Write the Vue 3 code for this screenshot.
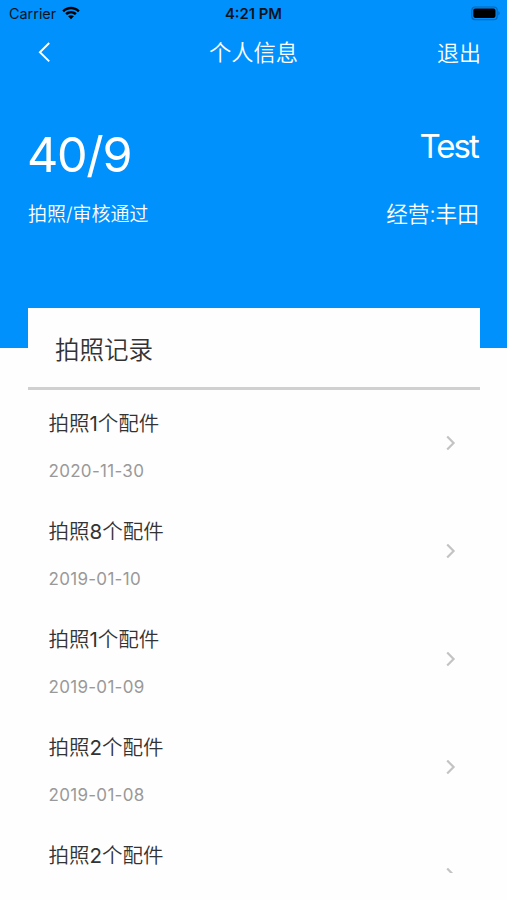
<script setup>
const records = [
  { id: 1, count: 1, date: '2020-11-30' },
  { id: 2, count: 8, date: '2019-01-10' },
  { id: 3, count: 1, date: '2019-01-09' },
  { id: 4, count: 2, date: '2019-01-08' },
  { id: 5, count: 2 },
]
</script>

<template>
  <div class="screen">
    <header class="hero">
      <div class="status">
        <div class="carrier">
          <span>Carrier</span>
          <svg class="wifi" width="18" height="14" viewBox="0 0 18 14">
            <path d="M0.3 4.4C5.3-.5 12.7-.5 17.7 4.4L16 6.2C12 2.4 6 2.4 2 6.2Z" />
            <path d="M3.2 7.3C6.6 4.1 11.4 4.1 14.8 7.3L13 9.1C10.6 6.9 7.4 6.9 5 9.1Z" />
            <path d="M6.1 10.3C7.8 8.8 10.2 8.8 11.9 10.3L9 13.3Z" />
          </svg>
        </div>
        <span class="clock">4:21 PM</span>
        <svg class="battery" width="30" height="15" viewBox="0 0 30 15">
          <rect x="0.8" y="1" width="25.4" height="12.6" rx="3.4" fill="none" stroke="#0367b5" stroke-width="1.2" />
          <rect x="2.3" y="2.6" width="22.2" height="9.3" rx="1.8" />
          <path d="M27.4 5.1Q30 7.3 27.4 9.5Z" fill="#0367b5" />
        </svg>
      </div>
      <nav class="nav">
        <svg class="back" width="13" height="22" viewBox="0 0 13 22">
          <path d="M11.2 2L1.9 11.2L11.2 20.4" fill="none" stroke="#fff" stroke-width="1.9" />
        </svg>
        <h1 class="title">个人信息</h1>
        <span class="logout">退出</span>
      </nav>
      <div class="summary">
        <div>
          <div class="total">40/9</div>
          <div class="total-label">拍照/审核通过</div>
        </div>
        <div class="user">
          <div class="name">Test</div>
          <div class="brand">经营:丰田</div>
        </div>
      </div>
    </header>
    <main class="card">
      <h2 class="heading">拍照记录</h2>
      <ul class="list">
        <li v-for="r in records" :key="r.id" class="row">
          <div>
            <div class="row-title">拍照<span class="count">{{ r.count }}</span>个配件</div>
            <div v-if="r.date" class="row-date">{{ r.date }}</div>
          </div>
          <svg class="arrow" width="12" height="18" viewBox="0 0 12 18">
            <path d="M2.2 2.6L8.6 9.1L2.2 15.6" fill="none" stroke="#c3c3c3" stroke-width="2.2" />
          </svg>
        </li>
      </ul>
    </main>
  </div>
</template>

<style>
body {
  margin: 0;
  background: #fefefe;
}
</style>

<style scoped>
.screen {
  height: 900px;
  overflow: hidden;
  background: #fefefe;
  color: #333;
  font-family: Inter, "Noto Sans CJK SC", sans-serif;
  font-weight: 350;
}
.hero {
  box-sizing: border-box;
  height: 348.4px;
  background: #0091fd;
  color: #fff;
}
.status {
  display: grid;
  grid-template-columns: 1fr auto 1fr;
  align-items: center;
  height: 27px;
  padding: 0 6px 0 9px;
  color: #07131d;
  font-size: 14.4px;
}
.carrier {
  display: flex;
  align-items: center;
  gap: 6px;
  font-weight: 400;
}
.wifi {
  margin-top: -1px;
}
.clock {
  margin-left: -3px;
  font-size: 14.8px;
  font-weight: 600;
}
.battery {
  justify-self: end;
}
.nav {
  display: grid;
  grid-template-columns: 1fr auto 1fr;
  align-items: center;
  height: 49px;
  padding: 0 26px 0 38px;
}
.title {
  margin: -1px 0 0 -12px;
  font-size: 22.3px;
  font-weight: 350;
}
.logout {
  justify-self: end;
  margin-top: -1px;
  font-size: 22px;
}
.summary {
  display: flex;
  justify-content: space-between;
  padding: 48px 28px 0;
}
.total {
  height: 60px;
  margin-left: -1px;
  line-height: 61px;
  font-size: 48.5px;
  font-weight: 400;
  letter-spacing: -1.3px;
}
.total-label {
  height: 30px;
  margin-top: 16px;
  line-height: 30px;
  font-size: 19px;
}
.user {
  text-align: right;
}
.name {
  height: 44px;
  margin-right: 1px;
  line-height: 45px;
  font-size: 33px;
  font-weight: 400;
  letter-spacing: -1.9px;
}
.brand {
  height: 30px;
  margin-top: 31px;
  line-height: 30px;
  font-size: 21.7px;
}
.card {
  position: relative;
  height: 565px;
  margin: -40px 27px 0 28px;
  background: #fefefe;
  overflow: hidden;
}
.heading {
  height: 79px;
  margin: 0;
  padding-left: 27px;
  border-bottom: 3px solid #d0d0d0;
  line-height: 85px;
  font-size: 24.5px;
  font-weight: 350;
}
.list {
  margin: 0;
  padding: 0;
  list-style: none;
}
.row {
  display: flex;
  box-sizing: border-box;
  justify-content: space-between;
  height: 107.8px;
  padding: 19px 23.5px 0 20.5px;
}
.row-title {
  height: 30px;
  line-height: 30px;
  font-size: 20.5px;
}
.count {
  font-weight: 400;
}
.row-date {
  height: 24px;
  margin-top: 20px;
  line-height: 24px;
  font-size: 17px;
  font-weight: 400;
  letter-spacing: 0.3px;
  color: #999;
}
.arrow {
  margin-top: 25px;
}
</style>
